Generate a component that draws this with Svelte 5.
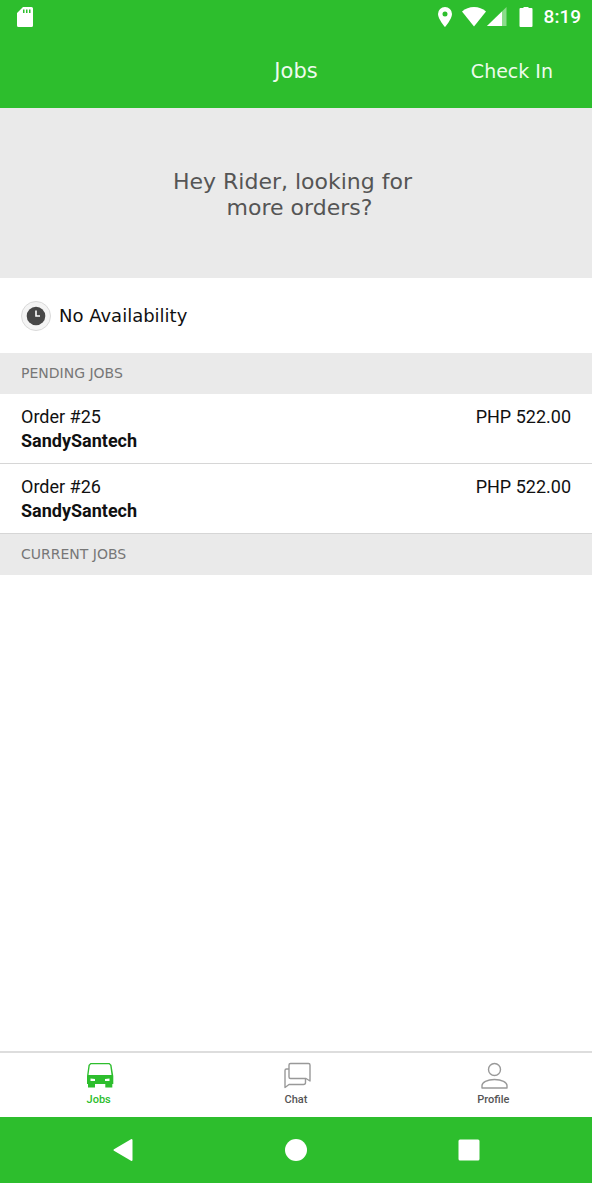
<script lang="ts">
	type Job = { id: number; store: string; price: string };

	const pendingJobs: Job[] = [
		{ id: 25, store: 'SandySantech', price: 'PHP 522.00' },
		{ id: 26, store: 'SandySantech', price: 'PHP 522.00' }
	];

	const currentJobs: Job[] = [];

	const sections = [
		{ title: 'Pending jobs', jobs: pendingJobs },
		{ title: 'Current jobs', jobs: currentJobs }
	];

	// Both spaces around the break are kept, so the lines centre slightly apart
	const greeting = 'Hey Rider, looking for \n more orders?';

	const tabs = ['Jobs', 'Chat', 'Profile'];
	let activeTab = $state('Jobs');
</script>

<div class="screen">
	<div class="status-bar">
		<svg class="sd-card" width="18" height="22" viewBox="0 0 18 22" aria-hidden="true">
			<path
				fill="#fff"
				fill-rule="evenodd"
				d="M7 1h8.500q1.500 0 1.500 1.500v17q0 1.500-1.500 1.500h-13Q1 21 1 19.500V7zM7 3.500V7h1.500V3.500zM10 3.500V7h1.500V3.500zM13 3.500V7h1.500V3.500z"
			/>
		</svg>
		<div class="status-icons">
			<svg width="16" height="22" viewBox="0 0 16 22" aria-hidden="true">
				<path
					fill="#fff"
					fill-rule="evenodd"
					d="M8 1a7 7 0 0 0-7 7c0 5 7 13 7 13s7-8 7-13a7 7 0 0 0-7-7zm0 4.500a2.500 2.500 0 1 1 0 5 2.500 2.500 0 0 1 0-5z"
				/>
			</svg>
			<svg class="wifi" width="26" height="22" viewBox="0 0 26 22" aria-hidden="true">
				<path fill="#fff" d="M13 20.500L1 5.500Q6 1 13 1t12 4.500z" />
			</svg>
			<svg width="20" height="22" viewBox="0 0 20 22" aria-hidden="true">
				<path fill="#8bdc8b" d="M19.500 1v19H0z" />
				<path fill="#fff" d="M15 5.400V20H0z" />
			</svg>
			<svg class="battery" width="14" height="22" viewBox="0 0 14 22" aria-hidden="true">
				<path
					fill="#fff"
					d="M4.500 1h5v1H12.500q1 0 1 1v17q0 1-1 1H1.500q-1 0-1-1V3q0-1 1-1h3z"
				/>
			</svg>
			<time>8:19</time>
		</div>
	</div>

	<header class="app-bar">
		<h1>Jobs</h1>
		<button type="button" class="check-in">Check In</button>
	</header>

	<main>
		<p class="greeting">{greeting}</p>

		<div class="availability">
			<svg width="32" height="32" viewBox="0 0 32 32" aria-hidden="true">
				<circle cx="16" cy="16" r="14.500" fill="#f4f4f4" stroke="#d9d9d9" />
				<circle cx="16" cy="16" r="9.300" fill="#474747" />
				<path d="M16 10.500V16h4" fill="none" stroke="#fff" stroke-width="1.600" />
			</svg>
			<span>No Availability</span>
		</div>

		{#each sections as section (section.title)}
			<section>
				<h2>{section.title}</h2>
				{#if section.jobs.length > 0}
					<ul>
						{#each section.jobs as job (job.id)}
							<li>
								<div>
									<div>Order #{job.id}</div>
									<strong>{job.store}</strong>
								</div>
								<span>{job.price}</span>
							</li>
						{/each}
					</ul>
				{/if}
			</section>
		{/each}
	</main>

	<nav class="tabs" aria-label="Main">
		{#each tabs as tab (tab)}
			<button
				type="button"
				class:active={activeTab === tab}
				aria-pressed={activeTab === tab}
				onclick={() => (activeTab = tab)}
			>
				<svg width="32" height="30" viewBox="0 0 32 30" aria-hidden="true">
					{#if tab === 'Jobs'}
						<path
							fill="currentColor"
							fill-rule="evenodd"
							d="M7.500 2h19l2 2 1.800 11v8h-1V26.500h-7v-3.500H12V26.500H5v-3.500H4V15L5.500 4zM8 3.300L6.800 4.600 5.500 14h23L27.200 4.600 26 3.300zM7.500 17.500v2.500h4.500v-2zM26.500 17.500v2.500H22v-2z"
						/>
					{:else if tab === 'Chat'}
						<g fill="none" stroke="currentColor" stroke-width="1.400" stroke-linejoin="round">
							<path
								d="M10.500 2.500h18q1.500 0 1.500 1.500v16L26 17.500H10.500q-1.500 0-1.500-1.500V4q0-1.500 1.500-1.500z"
							/>
							<path d="M9 8H6.500Q5 8 5 9.500V26.500l4-3h14.500q2 0 2-2v-4" />
						</g>
					{:else}
						<g fill="none" stroke="currentColor" stroke-width="1.400" stroke-linejoin="round">
							<circle cx="17.500" cy="8.500" r="6" />
							<path d="M5 27v-2.500c0-3 5-6 12.500-6s12.500 3 12.500 6V27z" />
						</g>
					{/if}
				</svg>
				<span>{tab}</span>
			</button>
		{/each}
	</nav>

	<div class="system-nav">
		<button type="button" aria-label="Back">
			<svg width="24" height="24" viewBox="0 0 24 24" aria-hidden="true">
				<path
					d="M20.500 2v20L3.500 12z"
					fill="#fff"
					stroke="#fff"
					stroke-width="2"
					stroke-linejoin="round"
				/>
			</svg>
		</button>
		<button type="button" aria-label="Home">
			<svg width="24" height="24" viewBox="0 0 24 24" aria-hidden="true">
				<circle cx="12" cy="12" r="11" fill="#fff" />
			</svg>
		</button>
		<button type="button" aria-label="Recent apps">
			<svg width="24" height="24" viewBox="0 0 24 24" aria-hidden="true">
				<rect x="1.500" y="1.500" width="21" height="21" rx="1.500" fill="#fff" />
			</svg>
		</button>
	</div>
</div>

<style>
	:global(body) {
		background: #fff;
	}

	.screen {
		--green: #2dbe2d;
		--grey: #eaeaea;
		--line: #d6d6d6;

		display: flex;
		flex-direction: column;
		min-height: 100vh;
		font-family: Roboto, 'Liberation Sans', sans-serif;
		color: #111;
	}

	button {
		padding: 0;
		border: 0;
		background: none;
		color: inherit;
		font: inherit;
		cursor: pointer;
	}

	svg {
		display: block;
	}

	.status-bar {
		display: flex;
		justify-content: space-between;
		align-items: center;
		height: 34px;
		padding: 0 11px 0 16px;
		background: var(--green);
		color: #fff;
	}

	.status-icons {
		display: flex;
		align-items: center;
	}

	.wifi {
		margin-left: 8px;
	}

	.battery {
		margin: 0 11px 0 12px;
	}

	time {
		font-size: 19px;
		font-weight: 500;
		line-height: 22px;
	}

	.app-bar {
		display: grid;
		grid-template-columns: 1fr auto 1fr;
		align-items: center;
		height: 74px;
		padding: 0 39px;
		background: var(--green);
		color: #edfbed;
		font-family: 'DejaVu Sans', Verdana, sans-serif;
	}

	h1 {
		grid-column: 2;
		margin: 0;
		font-size: 21px;
		font-weight: 400;
	}

	.check-in {
		justify-self: end;
		font-size: 19px;
	}

	main {
		flex: 1;
	}

	.greeting {
		margin: 0;
		padding: 61px 24px 57px;
		background: var(--grey);
		color: #555;
		font-family: 'DejaVu Sans', Verdana, sans-serif;
		font-size: 22px;
		line-height: 26px;
		text-align: center;
		white-space: pre;
	}

	.availability {
		display: flex;
		align-items: center;
		gap: 7px;
		height: 75px;
		padding: 0 20px;
		font-family: 'DejaVu Sans', Verdana, sans-serif;
		font-size: 18px;
	}

	h2 {
		margin: 0;
		padding: 0 21px;
		background: var(--grey);
		color: #777;
		font-family: 'DejaVu Sans', Verdana, sans-serif;
		font-size: 14px;
		font-weight: 400;
		line-height: 41px;
		text-transform: uppercase;
	}

	ul {
		margin: 0;
		padding: 0;
		list-style: none;
	}

	li {
		display: flex;
		justify-content: space-between;
		padding: 11px 21px 10px;
		border-bottom: 1px solid var(--line);
		font-size: 18px;
		line-height: 24px;
	}

	strong {
		font-weight: 700;
	}

	.tabs {
		display: flex;
		border-top: 2px solid #ddd;
	}

	.tabs button {
		display: flex;
		flex: 1;
		flex-direction: column;
		align-items: center;
		gap: 1px;
		padding: 8px 0 10px;
		color: #999;
		font-size: 11px;
		font-weight: 500;
		line-height: 15px;
	}

	.tabs span {
		color: #555;
	}

	.tabs .active,
	.tabs .active span {
		color: var(--green);
	}

	.system-nav {
		display: flex;
		align-items: center;
		height: 66px;
		padding: 0 37px;
		background: var(--green);
	}

	.system-nav button {
		display: flex;
		flex: 1;
		justify-content: center;
	}
</style>
